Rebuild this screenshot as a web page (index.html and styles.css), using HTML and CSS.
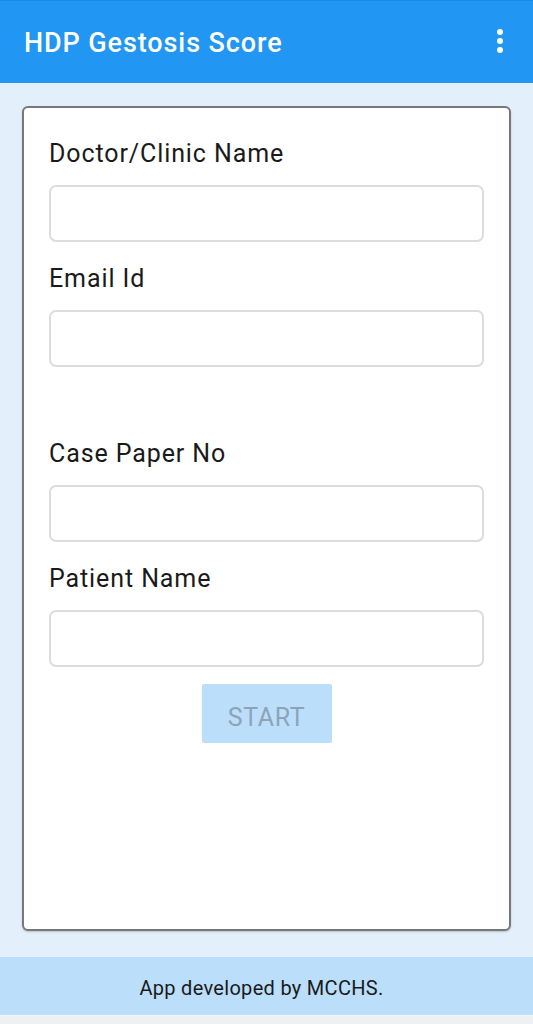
FILE: index.html
```html
<!DOCTYPE html>
<html lang="en">
<head>
    <meta charset="UTF-8">
    <meta name="viewport" content="width=device-width, initial-scale=1.0">
    <title>HDP Gestosis Score</title>
    <link rel="stylesheet" href="styles.css">
</head>
<body>
    <div class="app">
        <div class="appbar">
            <h1 class="title">HDP Gestosis Score</h1>
            <span class="menu"><i></i><i></i><i></i></span>
        </div>
        <div class="content">
            <div class="card">
                <label class="label" for="doctor">Doctor/Clinic Name</label>
                <input class="field" type="text" id="doctor">
                <label class="label" for="email">Email Id</label>
                <input class="field" type="email" id="email">
                <div class="spacer"></div>
                <label class="label" for="casepaper">Case Paper No</label>
                <input class="field" type="text" id="casepaper">
                <label class="label" for="patient">Patient Name</label>
                <input class="field" type="text" id="patient">
                <button class="start" disabled>START</button>
            </div>
        </div>
        <div class="footer">App developed by MCCHS.</div>
        <div class="navbar"></div>
    </div>
</body>
</html>
```

FILE: styles.css
```css
html, body{
    margin: 0;
    padding: 0;
    font-family: Roboto, 'Liberation Sans', sans-serif;
}
.app{
    height: 1024px;
    display: flex;
    flex-direction: column;
    background-color: #e3f0fb;
}
.appbar{
    height: 83px;
    background-color: #2196f3;
    border-top: 1px solid #1e88e5;
    box-sizing: border-box;
    display: flex;
    align-items: center;
    justify-content: space-between;
    padding: 0 30px 0 24px;
    flex-shrink: 0;
}
.title{
    margin: 0;
    color: white;
    font-size: 27px;
    font-weight: 500;
    letter-spacing: 0.9px;
    margin-top: 1px;
}
.menu{
    display: flex;
    flex-direction: column;
    gap: 3px;
    margin-top: -2px;
}
.menu i{
    width: 6px;
    height: 6px;
    border-radius: 50%;
    background-color: white;
}
.content{
    flex: 1;
    padding: 23px 22px 22px 22px;
    display: flex;
}
.card{
    flex: 1;
    background-color: white;
    border: 2px solid #787878;
    border-radius: 6px;
    box-shadow: 0 1px 2px rgba(0,0,0,0.2);
    padding: 32px 25px 0 25px;
    display: flex;
    flex-direction: column;
}
.label{
    font-size: 25px;
    line-height: 28px;
    letter-spacing: 0.9px;
    color: #1a1a1a;
}
.field{
    margin: 17px 0 23px 0;
    height: 57px;
    box-sizing: border-box;
    border: 2px solid #dcdcdc;
    border-radius: 7px;
    background: white;
    outline: none;
    font-size: 20px;
    font-family: inherit;
}
.spacer{
    height: 50px;
}
.start{
    align-self: center;
    margin-top: -6px;
    width: 130px;
    height: 59px;
    padding-top: 8px;
    border: none;
    border-radius: 2px;
    background-color: #bbdefb;
    color: #8ea3b5;
    font-family: inherit;
    font-size: 25px;
    letter-spacing: 0.6px;
}
.footer{
    height: 58px;
    margin-top: 4px;
    flex-shrink: 0;
    background-color: #bbdefb;
    display: flex;
    align-items: center;
    justify-content: center;
    padding-top: 3px;
    padding-right: 10px;
    box-sizing: border-box;
    font-size: 20px;
    letter-spacing: 0.3px;
    color: #1a1a1a;
}
.navbar{
    height: 8px;
    background-color: #eef1f3;
    border-top: 1px solid #f4f7fa;
}
```
